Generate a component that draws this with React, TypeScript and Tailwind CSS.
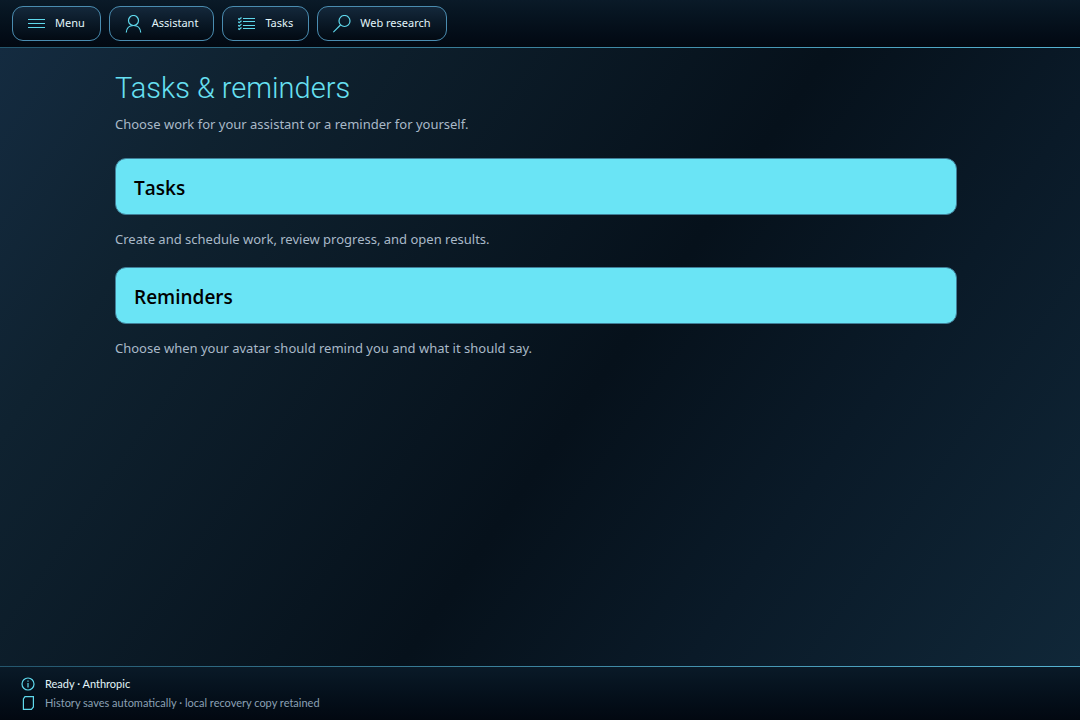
import type { ReactNode } from 'react'

interface IconProps {
  children: ReactNode
}

function NavIcon({ children }: IconProps) {
  return (
    <svg className="h-[18px] w-[18px] shrink-0" viewBox="0 0 18 18" fill="none" stroke="#5fd8ec" strokeWidth="1.2" aria-hidden="true">
      {children}
    </svg>
  )
}

function StatusIcon({ children }: IconProps) {
  return (
    <svg className="h-[14px] w-[14px] shrink-0" viewBox="0 0 14 14" fill="none" stroke="#5fd8ec" strokeWidth="1.2" aria-hidden="true">
      {children}
    </svg>
  )
}

const navItems = [
  {
    label: 'Menu',
    icon: <path d="M0 4.5h17M0 8.5h17M0 12.5h17" strokeWidth="1" />,
  },
  {
    label: 'Assistant',
    icon: (
      <>
        <circle cx="8.5" cy="5.500" r="5" />
        <path d="M1.300 17.500c.3-4.200 3-7 7.200-7s6.900 2.800 7.200 7" />
      </>
    ),
  },
  {
    label: 'Tasks',
    icon: (
      <path d="M5 3.500h12M5 6.500h12M5 10.500h12M5 13.500h12M0 3.500l1.200 1L3.500 2.500M0 6.800l1.200 1L3.500 5.800M0 10.100l1.200 1L3.500 9.100M0 13.500l1.200 1L3.500 12.500" />
    ),
  },
  {
    label: 'Web research',
    icon: (
      <>
        <circle cx="11.500" cy="6" r="5.500" />
        <path d="M7.500 10L.3 17.200" />
      </>
    ),
  },
]

const sections = [
  { title: 'Tasks', text: 'Create and schedule work, review progress, and open results.' },
  { title: 'Reminders', text: 'Choose when your avatar should remind you and what it should say.' },
]

export default function App() {
  return (
    <div className="flex min-h-screen flex-col bg-[#07121d] font-['Noto_Sans',sans-serif]">
      <header className="bg-linear-to-b from-[#0a1a28] to-[#020811]">
        <nav className="flex flex-wrap gap-2 px-3 py-1.5">
          {navItems.map((item) => (
            <button
              key={item.label}
              type="button"
              className="flex h-[35px] items-center gap-[9px] rounded-[11px] border border-[#4a8cb0] bg-linear-to-b from-[#14283b] to-[#030a13] px-[15px] text-[11px] text-[#e2f5fa]"
            >
              <NavIcon>{item.icon}</NavIcon>
              {item.label}
            </button>
          ))}
        </nav>
        <div className="h-px bg-linear-to-r from-[#24566d] to-[#56b4d3]" />
      </header>

      <main className="flex-1 bg-[linear-gradient(125deg,#142b40_0%,#0f2230_18%,#06111b_55%,#0a1a28_74%,#102738_100%)] pr-2">
        <div className="mx-auto max-w-[842px] pt-5">
          <h1 className="font-[Roboto,sans-serif] text-[29px] leading-10 font-light text-[#67e0f2]">Tasks & reminders</h1>
          <p className="mt-1.5 text-[13px] leading-5 text-[#a9b9c8]">Choose work for your assistant or a reminder for yourself.</p>
          <div className="mt-6 flex flex-col gap-[18px]">
            {sections.map((section) => (
              <section key={section.title}>
                <button
                  type="button"
                  className="block h-[57px] w-full rounded-[11px] border border-[#407f98] bg-[#6ae4f5] px-[18px] pt-1 text-left font-['Open_Sans',sans-serif] text-[19px] font-semibold text-black"
                >
                  {section.title}
                </button>
                <p className="mt-3.5 text-[13px] leading-5 text-[#a9b9c8]">{section.text}</p>
              </section>
            ))}
          </div>
        </div>
      </main>

      <footer className="bg-linear-to-b from-[#0a1a28] to-[#020811]">
        <div className="h-px bg-linear-to-r from-[#24566d] to-[#56b4d3]" />
        <div className="flex flex-col gap-[3px] px-[21px] py-[9px] font-[Lato,sans-serif] text-[11px] leading-4">
          <div className="flex items-center gap-2.5 text-[#e2f5fa]">
            <StatusIcon>
              <circle cx="7" cy="7" r="6" />
              <path d="M7 6v4.500M7 3.500v1.200" />
            </StatusIcon>
            Ready · Anthropic
          </div>
          <div className="flex items-center gap-2.5 text-[#8ba0b4]">
            <StatusIcon>
              <path d="M4 .6h8.400v10.400l-2 2.400h-8V3z" />
            </StatusIcon>
            History saves automatically · local recovery copy retained
          </div>
        </div>
      </footer>
    </div>
  )
}
